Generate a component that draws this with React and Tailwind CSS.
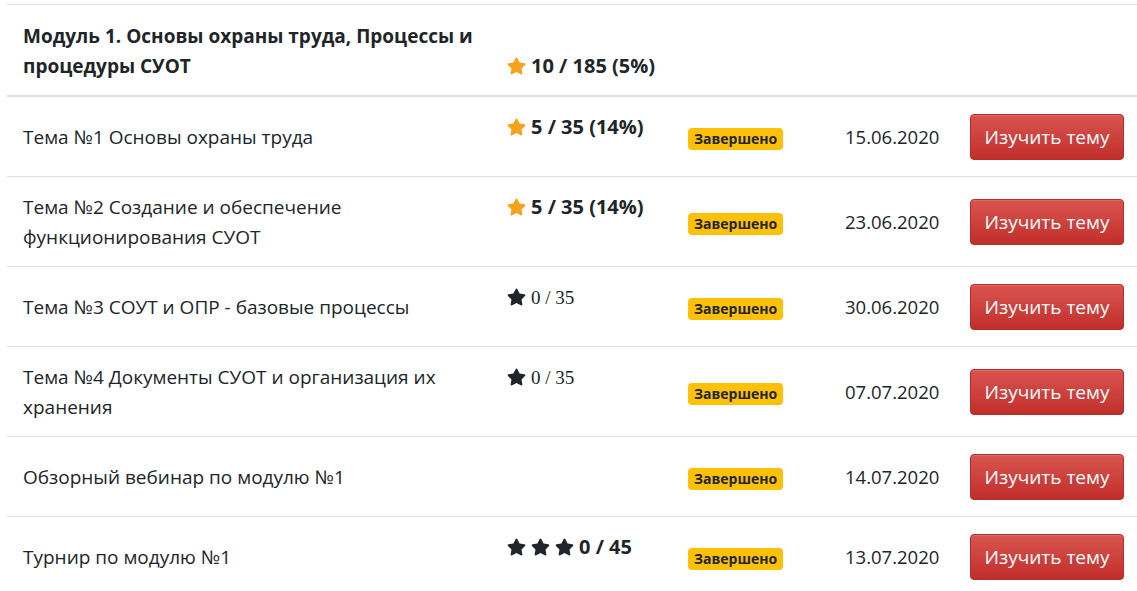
import React from "react";

const Star = ({ color }) => (
  <svg viewBox="0 0 576 512" className="inline-block w-[19px] h-[18px] mr-[5px] align-[-2px]" fill={color}>
    <path d="M259.3 17.8L194 150.2 47.9 171.5c-26.2 3.8-36.7 36.1-17.7 54.6l105.7 103-25 145.5c-4.5 26.3 23.2 46 46.4 33.7L288 439.6l130.7 68.7c23.2 12.2 50.9-7.4 46.4-33.7l-25-145.5 105.7-103c19-18.5 8.5-50.8-17.7-54.6L382 150.2 316.7 17.8c-11.7-23.6-45.6-23.9-57.4 0z" />
  </svg>
);

const rows = [
  { title: "Тема №1 Основы охраны труда", score: "orange", text: "5 / 35 (14%)", date: "15.06.2020" },
  { title: "Тема №2 Создание и обеспечение функционирования СУОТ", score: "orange", text: "5 / 35 (14%)", date: "23.06.2020" },
  { title: "Тема №3 СОУТ и ОПР - базовые процессы", score: "serif", text: "0 / 35", date: "30.06.2020" },
  { title: "Тема №4 Документы СУОТ и организация их хранения", score: "serif", text: "0 / 35", date: "07.07.2020" },
  { title: "Обзорный вебинар по модулю №1", score: null, text: "", date: "14.07.2020" },
  { title: "Турнир по модулю №1", score: "three", text: "0 / 45", date: "13.07.2020" },
];

function Score({ r }) {
  if (!r.score) return null;
  if (r.score === "orange")
    return (
      <span className="font-bold whitespace-nowrap text-[20px]">
        <Star color="#f7a21b" />
        {r.text}
      </span>
    );
  if (r.score === "serif")
    return (
      <span className="whitespace-nowrap">
        <Star color="#212529" />
        <span className="font-['Liberation_Serif',serif] text-[19px]">{r.text}</span>
      </span>
    );
  return (
    <span className="font-bold whitespace-nowrap text-[20px]">
      <Star color="#212529" />
      <Star color="#212529" />
      <Star color="#212529" />
      {r.text}
    </span>
  );
}

export default function App() {
  return (
    <div className="bg-white w-[1137px] h-[591px] overflow-hidden pl-[7px] pt-[4px] text-[#212529] font-['Open_Sans',sans-serif] text-[19px] leading-[30px]">
      <table className="w-[1130px] border-collapse table-fixed">
        <colgroup>
          <col className="w-[484px]" />
          <col className="w-[181px]" />
          <col className="w-[157px]" />
          <col className="w-[125px]" />
          <col className="w-[183px]" />
        </colgroup>
        <thead>
          <tr className="border-t border-[#dee2e6] border-b-2 border-b-[#dee2e6]">
            <th className="text-left align-bottom pl-4 pr-2 pt-[16px] pb-[14px] font-bold h-[91px]">
              Модуль 1. Основы охраны труда, Процессы и процедуры СУОТ
            </th>
            <th className="text-left align-bottom pl-4 pt-[16px] pb-[14px] font-bold text-[20px]">
              <span className="whitespace-nowrap">
                <Star color="#f7a21b" />
                10 / 185 (5%)
              </span>
            </th>
            <th />
            <th />
            <th />
          </tr>
        </thead>
        <tbody>
          {rows.map((r, i) => (
            <tr key={i} className="border-b border-[#dee2e6]">
              <td className="align-middle pl-4 pr-2 pt-[15px] pb-[14px]">{r.title}</td>
              <td className="align-top pl-4 pt-[15px] pb-[14px]">
                <div className="h-[50px]">
                  <Score r={r} />
                </div>
              </td>
              <td className="align-middle pl-4 py-[14px]">
                <span className="inline-block bg-[#ffc107] rounded-[4px] px-[6px] text-[14px] leading-[22px] font-bold text-[#212529]">
                  Завершено
                </span>
              </td>
              <td className="align-middle pl-4 py-[14px] text-[18.5px]">{r.date}</td>
              <td className="align-middle pl-4 py-[14px]">
                <button className="w-[154px] h-[46px] rounded-[4px] border border-[#b92c28] bg-linear-to-b from-[#d9534f] to-[#c12e2a] text-white text-[19px] shadow-[inset_0_1px_0_rgba(255,255,255,0.15)]">
                  Изучить тему
                </button>
              </td>
            </tr>
          ))}
        </tbody>
      </table>
    </div>
  );
}
